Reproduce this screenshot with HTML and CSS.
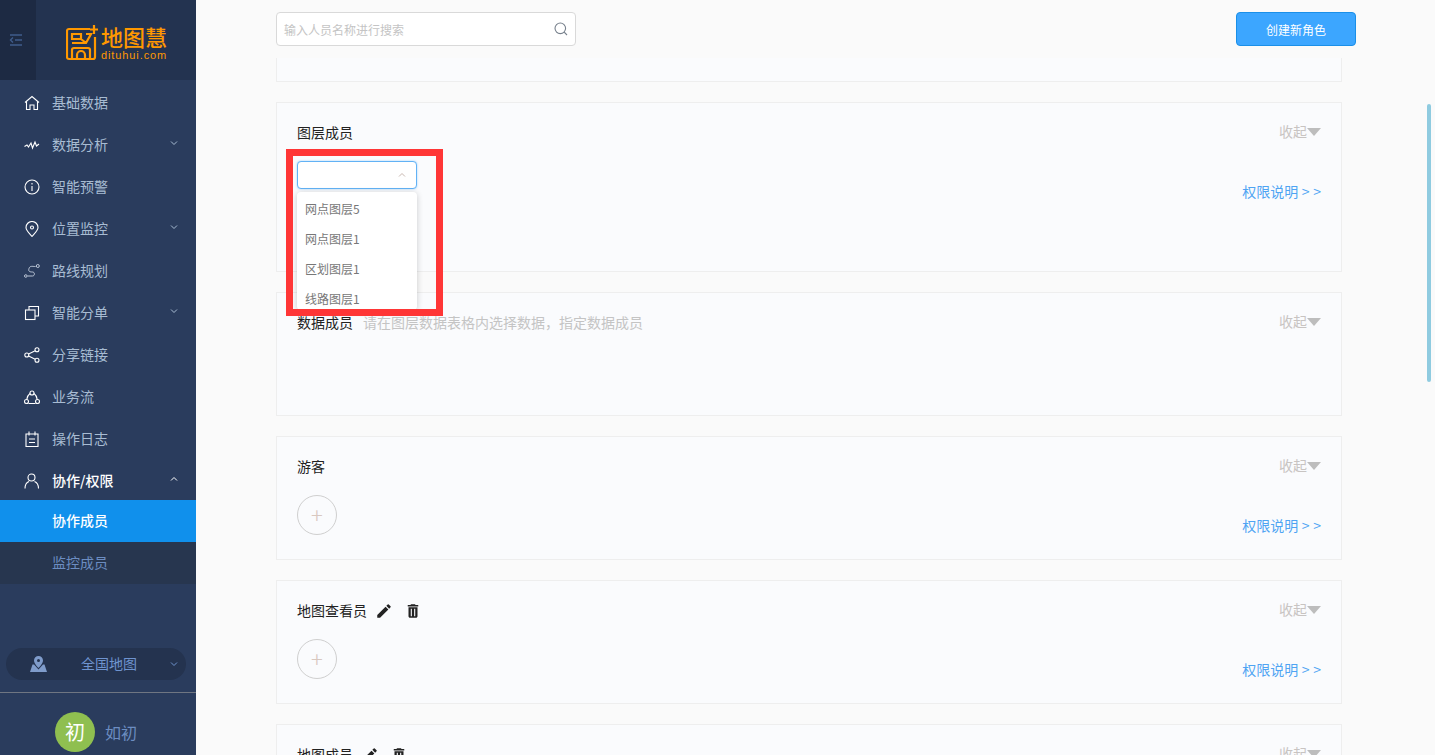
FILE: index.html
```html
<!DOCTYPE html>
<html lang="zh-CN">
<head>
  <meta charset="UTF-8" />
  <title>协作成员</title>
  <link rel="stylesheet" href="styles.css">
</head>
<body>
  <aside class="sidebar">
    <div class="brand">
      <div class="toggle">
        <svg width="14" height="14" viewBox="0 0 14 14" fill="none" stroke="#3f5c8c" stroke-width="1.4"><path d="M1 2h12M6 7h7M1 12h12M4 4.500 1.500 7 4 9.500"/></svg>
      </div>
      <div class="logo">
        <svg class="logo-mark" width="33" height="36" viewBox="0 0 33 36" fill="none" stroke="#ff9800" stroke-width="2.200"><path d="M24 4H3a2 2 0 0 0-2 2v26a2 2 0 0 0 2 2h24a2 2 0 0 0 2-2V12"/><path d="M6 9h9v5H6zM20 9h5l-5 9H6M15 14l5 4"/><path d="M6 34V25a2 2 0 0 1 2-2h14a2 2 0 0 1 2 2v9M11 34v-4a4 4 0 0 1 8 0v4"/><path d="M28 0v9M24 4.500h8"/></svg>
        <div class="logo-text">
          <div class="logo-name">地图慧</div>
          <div class="logo-url">dituhui.com</div>
        </div>
      </div>
    </div>

    <nav class="menu">
      <a class="menu-item">
        <svg class="menu-icon" viewBox="0 0 16 16"><path d="M1 7.500 8 1.500l7 6M2.500 6.500V14.500h3.500V10h4v4.500h3.500V6.500"/></svg>
        基础数据
      </a>
      <a class="menu-item">
        <svg class="menu-icon" viewBox="0 0 16 16"><path d="M.5 9.500 3 8l1.500 2 2.500-4 1.500 5 2.500-6 1.500 4 2.500-2"/></svg>
        数据分析
        <svg class="chevron" viewBox="0 0 8 6"><path d="M1 1.500 4 4.500 7 1.500"/></svg>
      </a>
      <a class="menu-item">
        <svg class="menu-icon" viewBox="0 0 16 16"><circle cx="8" cy="8" r="7"/><path d="M8 7v5M8 4v1.500"/></svg>
        智能预警
      </a>
      <a class="menu-item">
        <svg class="menu-icon" viewBox="0 0 16 16"><path d="M8 15.500C5 12 2 9.500 2 6.500a6 6 0 0 1 12 0c0 3-3 5.500-6 9z"/><circle cx="8" cy="6.500" r="1.500"/></svg>
        位置监控
        <svg class="chevron" viewBox="0 0 8 6"><path d="M1 1.500 4 4.500 7 1.500"/></svg>
      </a>
      <a class="menu-item">
        <svg class="menu-icon thin" viewBox="0 0 16 16"><circle cx="1.800" cy="13" r="1.300"/><circle cx="13.800" cy="3" r="1.500"/><path d="M3.500 13h5c2.500 0 2.500-4 0-4S4 8.500 5 5.500 8 3.500 11.500 3.500"/></svg>
        路线规划
      </a>
      <a class="menu-item">
        <svg class="menu-icon" viewBox="0 0 16 16"><rect x="1.500" y="5" width="9.500" height="9.500"/><path d="M5 5V1.500h9.500V11H11"/></svg>
        智能分单
        <svg class="chevron" viewBox="0 0 8 6"><path d="M1 1.500 4 4.500 7 1.500"/></svg>
      </a>
      <a class="menu-item">
        <svg class="menu-icon" viewBox="0 0 16 16"><circle cx="2.800" cy="8" r="2"/><circle cx="13" cy="2.800" r="2"/><circle cx="13" cy="13.200" r="2"/><path d="M4.600 7 11.200 3.700M4.600 9l6.600 3.300"/></svg>
        分享链接
      </a>
      <a class="menu-item">
        <svg class="menu-icon" viewBox="0 0 16 16"><circle cx="8" cy="4" r="2"/><circle cx="2.500" cy="12.500" r="2"/><circle cx="13.500" cy="12.500" r="2"/><path d="M6 4.500C4 6 3 8 2.800 10.500M10 4.500c2 1.500 3 3.500 3.200 6M4.500 14.500h7"/></svg>
        业务流
      </a>
      <a class="menu-item">
        <svg class="menu-icon" viewBox="0 0 16 16"><path d="M2 3h12v12.500H2zM5 .5v4M11 .5v4M5 8h6M5 11.500h6"/></svg>
        操作日志
      </a>
      <a class="menu-item is-open">
        <svg class="menu-icon" viewBox="0 0 16 16"><circle cx="7.500" cy="4.500" r="3.500"/><path d="M1 15.500c0-4 1.500-6 4-7M14.500 15.500c0-4-1.500-6-4-7"/></svg>
        协作/权限
        <svg class="chevron" viewBox="0 0 8 6"><path d="M1 4.500 4 1.500 7 4.500"/></svg>
      </a>
      <div class="submenu">
        <a class="submenu-item is-active">协作成员</a>
        <a class="submenu-item">监控成员</a>
      </div>
    </nav>

    <div class="sidebar-foot">
      <div class="map-pill">
        <svg class="map-pin" width="17" height="16" viewBox="0 0 17 16" fill="#7f9ccb"><path d="M8.500 0a4.500 4.500 0 0 0-4.500 4.500C4 7.500 8.500 12 8.500 12S13 7.500 13 4.500A4.500 4.500 0 0 0 8.500 0zm0 3a1.500 1.500 0 1 1 0 3 1.500 1.500 0 0 1 0-3z"/><path d="M2.500 8.500 0 16h17l-2.500-7.500H13L8.500 13.500 4 8.500z"/></svg>
        <span class="map-name">全国地图</span>
        <svg class="chevron chevron-pill" viewBox="0 0 8 6"><path d="M1 1.500 4 4.500 7 1.500"/></svg>
      </div>
      <div class="user">
        <div class="avatar">初</div>
        <span class="user-name">如初</span>
      </div>
    </div>
  </aside>

  <main class="main">
    <header class="toolbar">
      <div class="search">
        <span class="search-hint">输入人员名称进行搜索</span>
        <svg width="14" height="14" viewBox="0 0 14 14" fill="none" stroke="#77808c" stroke-width="1.100"><circle cx="6.300" cy="6.300" r="5.300"/><path d="M10.200 10.200 13 13"/></svg>
      </div>
      <button class="btn-create">创建新角色</button>
    </header>

    <section class="card card-cut"></section>

    <section class="card card-layers">
      <div class="card-head">
        <span class="card-title">图层成员</span>
        <span class="collapse">收起<i class="caret"></i></span>
      </div>
      <div class="card-body">
        <div class="select">
          <svg width="8" height="6" viewBox="0 0 8 6" fill="none" stroke="#c9b8b0"><path d="M1 4.500 4 1.500 7 4.500"/></svg>
        </div>
        <a class="perm-link">权限说明 &gt; &gt;</a>
      </div>
      <ul class="dropdown">
        <li>网点图层5</li>
        <li>网点图层1</li>
        <li>区划图层1</li>
        <li>线路图层1</li>
      </ul>
    </section>

    <section class="card">
      <div class="card-head">
        <span class="card-title">数据成员</span>
        <span class="card-hint">请在图层数据表格内选择数据，指定数据成员</span>
        <span class="collapse">收起<i class="caret"></i></span>
      </div>
    </section>

    <section class="card">
      <div class="card-head">
        <span class="card-title">游客</span>
        <span class="collapse">收起<i class="caret"></i></span>
      </div>
      <div class="card-body">
        <div class="add-btn">+</div>
        <a class="perm-link">权限说明 &gt; &gt;</a>
      </div>
    </section>

    <section class="card">
      <div class="card-head">
        <span class="card-title">地图查看员</span>
        <svg class="role-icon" width="18" height="18" viewBox="0 0 24 24"><path d="M3 17.250V21h3.750L17.810 9.940l-3.750-3.750L3 17.250zM20.710 7.040a1 1 0 0 0 0-1.410l-2.340-2.340a1 1 0 0 0-1.410 0l-1.830 1.830 3.750 3.750 1.830-1.830z"/></svg>
        <svg class="role-icon" width="18" height="18" viewBox="0 0 24 24"><path d="M6 19c0 1.100.9 2 2 2h8c1.100 0 2-.9 2-2V7H6v12zM9 9h1.500v10H9V9zm4.500 0H15v10h-1.500V9zM19 4h-3.500l-1-1h-5l-1 1H5v2h14V4z"/></svg>
        <span class="collapse">收起<i class="caret"></i></span>
      </div>
      <div class="card-body">
        <div class="add-btn">+</div>
        <a class="perm-link">权限说明 &gt; &gt;</a>
      </div>
    </section>

    <section class="card">
      <div class="card-head">
        <span class="card-title">地图成员</span>
        <svg class="role-icon" width="18" height="18" viewBox="0 0 24 24"><path d="M3 17.250V21h3.750L17.810 9.940l-3.750-3.750L3 17.250zM20.710 7.040a1 1 0 0 0 0-1.410l-2.340-2.340a1 1 0 0 0-1.410 0l-1.830 1.830 3.750 3.750 1.830-1.830z"/></svg>
        <svg class="role-icon" width="18" height="18" viewBox="0 0 24 24"><path d="M6 19c0 1.100.9 2 2 2h8c1.100 0 2-.9 2-2V7H6v12zM9 9h1.500v10H9V9zm4.500 0H15v10h-1.500V9zM19 4h-3.500l-1-1h-5l-1 1H5v2h14V4z"/></svg>
        <span class="collapse">收起<i class="caret"></i></span>
      </div>
    </section>

    <div class="highlight"></div>
    <div class="scroll-thumb"></div>
  </main>
</body>
</html>
```

FILE: styles.css
```css
* {
  box-sizing: border-box;
}

html, body {
  height: 100%;
}

body {
  margin: 0;
  display: flex;
  height: 755px;
  overflow: hidden;
  background: #fafafa;
  color: #222;
  font-family: "Noto Sans CJK SC", "Liberation Sans", sans-serif;
  font-size: 14px;
}

/* sidebar */
.sidebar {
  width: 196px;
  flex: none;
  display: flex;
  flex-direction: column;
  background: #2a3c5d;
}

.brand {
  display: flex;
  height: 80px;
  background: #233350;
}

.toggle {
  width: 36px;
  display: flex;
  align-items: center;
  justify-content: center;
  background: #1d2a43;
  padding-right: 4px;
}

.logo {
  display: flex;
  align-items: center;
  padding: 0 0 0 30px;
  gap: 2px;
}

.logo-mark {
  margin-top: 5px;
}

.logo-text {
  color: #ff9800;
  padding-top: 6px;
}

.logo-name {
  font-size: 22px;
  line-height: 22px;
  font-weight: 500;
}

.logo-url {
  margin-top: 3px;
  font-family: "Liberation Sans", sans-serif;
  font-size: 11px;
  line-height: 11px;
  letter-spacing: 0.9px;
}

.menu {
  padding-top: 2px;
}

.menu-item {
  display: flex;
  align-items: center;
  height: 42px;
  padding-left: 24px;
  padding-bottom: 3px;
  color: #a8bcd3;
  line-height: 20px;
}

.menu-item.is-open {
  color: #fff;
  font-weight: 500;
}

.menu-icon {
  width: 16px;
  height: 16px;
  margin-right: 12px;
  margin-top: 2px;
  fill: none;
  stroke: #fff;
  stroke-width: 1.100;
}

.menu-icon.thin {
  stroke: #c9d4e2;
  stroke-width: 0.900;
}

.chevron {
  width: 8px;
  height: 6px;
  margin-left: auto;
  margin-right: 18px;
  margin-bottom: 2px;
  fill: none;
  stroke: #a8bcd3;
}

.is-open .chevron {
  stroke: #fff;
}

.submenu {
  margin-top: -2px;
  background: #27364f;
}

.submenu-item {
  display: block;
  height: 42px;
  line-height: 41px;
  padding-left: 52px;
  color: #6c8dc1;
}

.submenu-item.is-active {
  background: #1090ec;
  color: #fff;
  font-weight: 500;
}

.sidebar-foot {
  margin-top: auto;
}

.map-pill {
  display: flex;
  align-items: center;
  height: 32px;
  margin: 0 10px 0 6px;
  border-radius: 16px;
  background: #24334f;
  color: #6f94cf;
}

.map-pin {
  margin-left: 24px;
}

.map-name {
  margin-left: 34px;
  margin-bottom: 2px;
  line-height: 20px;
}

.chevron-pill {
  margin-right: 8px;
  margin-bottom: 0;
  stroke: #6f94cf;
}

.user {
  display: flex;
  align-items: center;
  gap: 10px;
  height: 63px;
  margin-top: 12px;
  padding: 19px 0 3px 55px;
  border-top: 1px solid #6f7682;
}

.avatar {
  width: 40px;
  height: 40px;
  border-radius: 50%;
  background: #8fbf50;
  color: #fff;
  font-size: 20px;
  line-height: 40px;
  text-align: center;
}

.user-name {
  color: #6c8dc1;
  font-size: 16px;
}

/* main column */
.main {
  position: relative;
  flex: 1;
  height: 755px;
  overflow: hidden;
  padding: 0 93px 0 80px;
}

.toolbar {
  display: flex;
  align-items: center;
  justify-content: space-between;
  height: 58px;
  margin-right: -14px;
}

.search {
  display: flex;
  align-items: center;
  justify-content: space-between;
  width: 300px;
  height: 34px;
  padding: 0 7px;
  background: #fff;
  border: 1px solid #d9d9d9;
  border-radius: 4px;
}

.search-hint {
  font-size: 12px;
  color: #c4c4c4;
}

.btn-create {
  width: 120px;
  height: 34px;
  padding: 0;
  background: #3ca6ff;
  border: 1px solid #1a8fe8;
  border-radius: 4px;
  color: #fff;
  font: inherit;
  font-size: 12px;
}

.card {
  position: relative;
  height: 124px;
  margin-bottom: 20px;
  padding: 20px 20px 0;
  background: #fafbfd;
  border: 1px solid #eee;
}

.card-cut {
  height: 24px;
  padding: 0;
  border-top: 0;
}

.card-layers {
  height: 170px;
}

.card-head {
  display: flex;
  align-items: center;
  height: 20px;
}

.card-title {
  color: #222;
  line-height: 18px;
  margin-bottom: 2px;
}

.card-hint {
  margin-left: 10px;
  color: #c4c4c4;
  line-height: 18px;
  margin-bottom: 2px;
}

.role-icon {
  margin-left: 11px;
  fill: #222;
}

.card-title + .role-icon {
  margin-left: 8px;
}

.collapse {
  display: flex;
  align-items: center;
  margin-left: auto;
  color: #c8c4c2;
  line-height: 18px;
  margin-bottom: 4px;
}

.caret {
  width: 0;
  height: 0;
  margin-top: 1px;
  border-left: 7px solid transparent;
  border-right: 7px solid transparent;
  border-top: 8px solid #bdbdbd;
}

.card-body {
  display: flex;
  align-items: flex-end;
  justify-content: space-between;
  height: 40px;
  margin-top: 18px;
}

.perm-link {
  margin-bottom: 1px;
  color: #4ea4f3;
  line-height: 18px;
  word-spacing: 0.5px;
}

.add-btn {
  width: 40px;
  height: 40px;
  border: 1px solid #cfcfcf;
  border-radius: 50%;
  color: #d8c8c0;
  font-size: 22px;
  font-weight: 300;
  line-height: 37px;
  text-align: center;
}

.select {
  display: flex;
  align-items: center;
  justify-content: flex-end;
  align-self: flex-start;
  width: 120px;
  height: 28px;
  padding-right: 10px;
  background: #fff;
  border: 1px solid #62b2f5;
  border-radius: 4px;
  box-shadow: 0 0 2px rgba(60, 166, 255, 0.5);
}

.dropdown {
  position: absolute;
  top: 89px;
  left: 20px;
  width: 120px;
  height: 118px;
  margin: 0;
  padding: 2px 0 0;
  overflow: hidden;
  list-style: none;
  background: #fff;
  border-radius: 4px;
  box-shadow: 0 1px 6px rgba(0, 0, 0, 0.2);
  z-index: 2;
}

.dropdown li {
  height: 30px;
  line-height: 30px;
  padding-left: 8px;
  font-size: 12px;
  color: #777;
}

.highlight {
  position: absolute;
  top: 149px;
  left: 90px;
  width: 157px;
  height: 167px;
  border: 7px solid #ff3636;
  z-index: 3;
}

.scroll-thumb {
  position: absolute;
  top: 104px;
  left: 1231px;
  width: 4px;
  height: 278px;
  border-radius: 2px;
  background: #8fcbe0;
}
```
